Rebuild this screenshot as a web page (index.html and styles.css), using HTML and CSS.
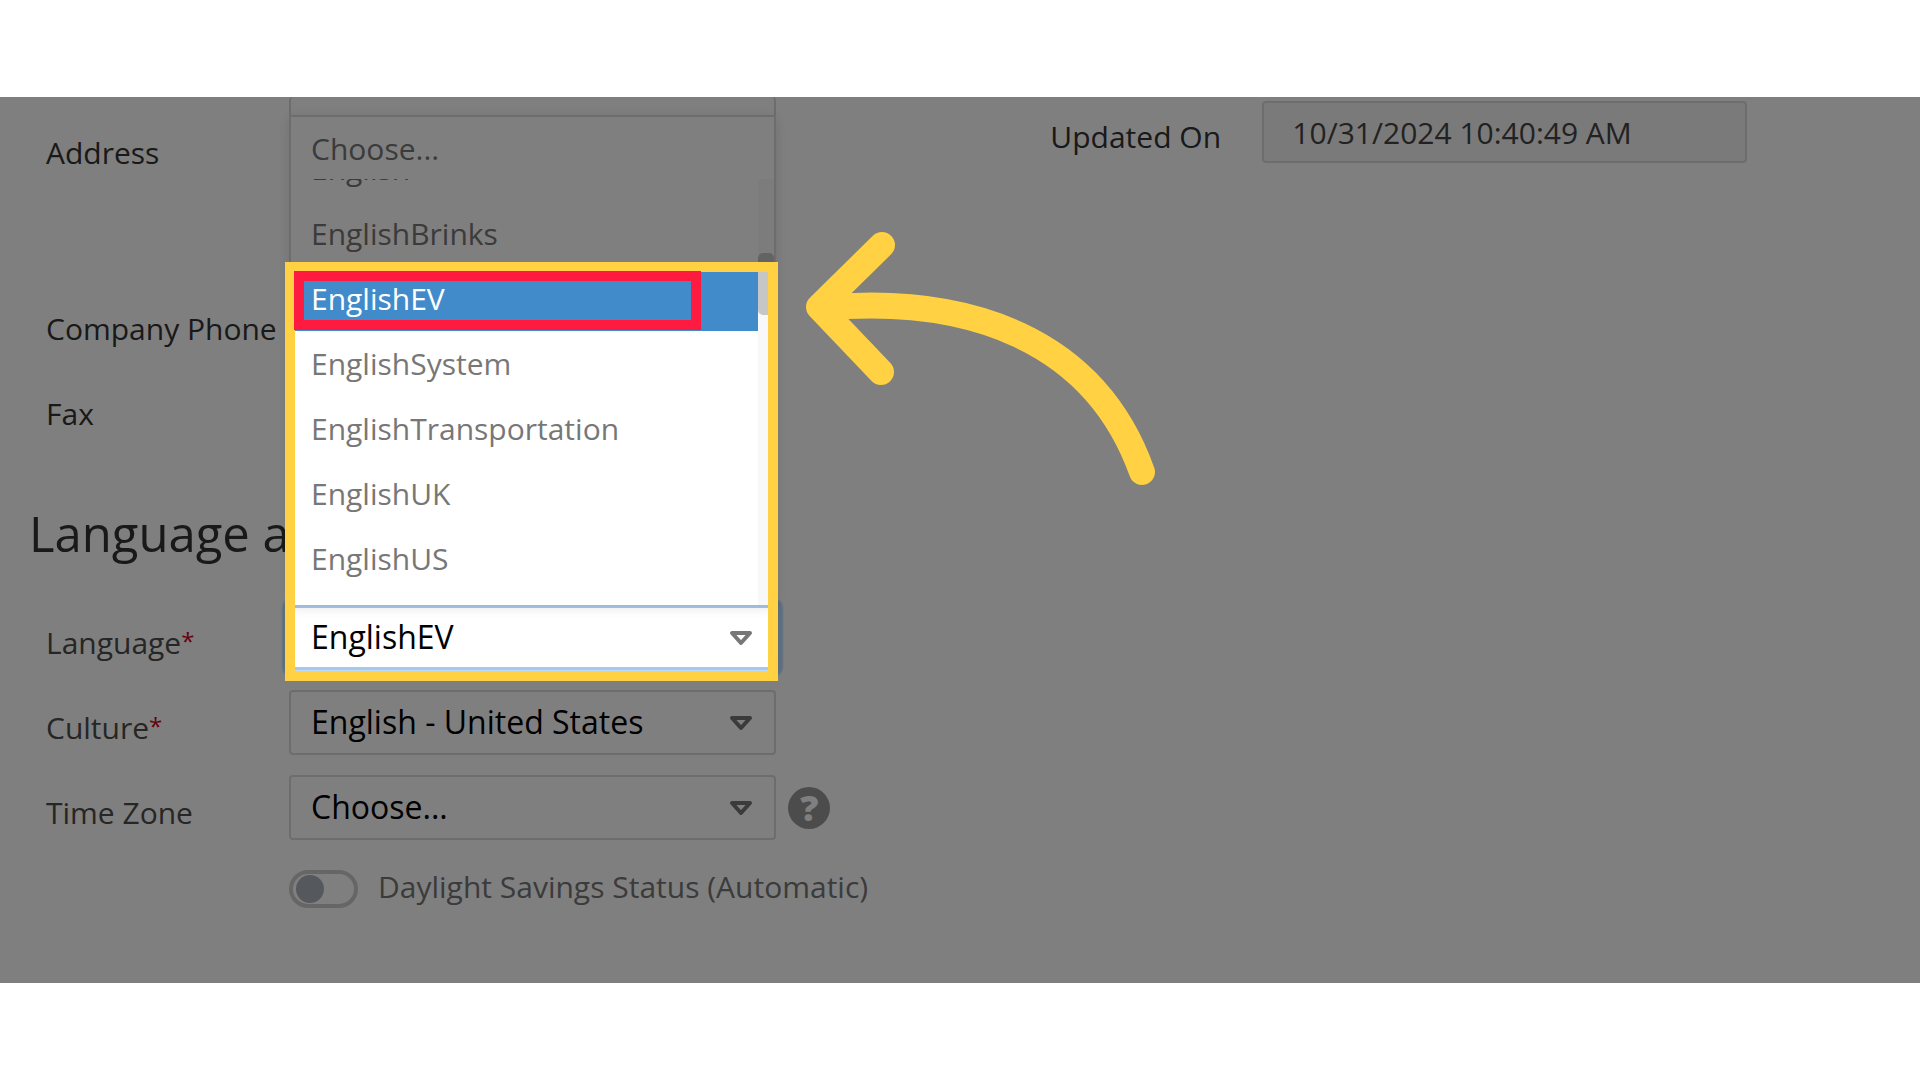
FILE: index.html
```html
<!doctype html>
<html lang="en">
  <head>
    <meta charset="UTF-8" />
    <meta name="viewport" content="width=device-width, initial-scale=1.0" />
    <title>Language Settings</title>
    <link rel="stylesheet" href="styles.css">
  </head>
  <body>
    <main class="stage">
      <form class="columns">
        <div class="column">
          <div class="row row-address">
            <label for="address">Address</label>
            <textarea id="address" class="control"></textarea>
          </div>
          <div class="row">
            <label for="phone">Company Phone</label>
            <input type="text" id="phone" class="control">
          </div>
          <div class="row">
            <label for="fax">Fax</label>
            <input type="text" id="fax" class="control">
          </div>

          <h2>Language a</h2>

          <div class="row soft">
            <label for="language">Language<span class="required">*</span></label>
            <div class="picker focused">
              <select id="language" class="control">
                <option>EnglishEV</option>
              </select>
              <svg class="caret" viewBox="0 0 24 16"><path d="M3 3H21L12 13Z" /></svg>
              <div class="menu">
                <div class="menu-head">Choose...</div>
                <div class="menu-body">
                  <ul role="listbox" aria-label="Language">
                    <li role="option">English</li>
                    <li role="option">EnglishBrinks</li>
                    <li role="option" aria-selected="true" class="active">EnglishEV</li>
                    <li role="option">EnglishSystem</li>
                    <li role="option">EnglishTransportation</li>
                    <li role="option">EnglishUK</li>
                    <li role="option">EnglishUS</li>
                  </ul>
                  <div class="track"><div class="thumb"></div></div>
                </div>
              </div>
              <div class="spotlight"></div>
              <div class="marker"></div>
            </div>
          </div>
          <div class="row soft">
            <label for="culture">Culture<span class="required">*</span></label>
            <div class="picker">
              <select id="culture" class="control">
                <option>English - United States</option>
              </select>
              <svg class="caret" viewBox="0 0 24 16"><path d="M3 3H21L12 13Z" /></svg>
            </div>
          </div>
          <div class="row soft">
            <label for="timezone">Time Zone</label>
            <div class="picker">
              <select id="timezone" class="control">
                <option>Choose...</option>
              </select>
              <svg class="caret" viewBox="0 0 24 16"><path d="M3 3H21L12 13Z" /></svg>
            </div>
            <button type="button" class="help" aria-label="Help">?</button>
          </div>
          <div class="switch-row">
            <input type="checkbox" id="daylight" class="switch">
            <label for="daylight">Daylight Savings Status (Automatic)</label>
          </div>
        </div>

        <div class="column">
          <div class="row row-updated">
            <label for="updated">Updated On</label>
            <input type="text" id="updated" class="control" value="10/31/2024 10:40:49 AM" readonly>
          </div>
        </div>
      </form>

      <svg class="arrow" viewBox="0 0 400 300">
        <path d="M102 35L39 97L101 162M40 98C190 84 315 130 362 262" />
      </svg>
    </main>
  </body>
</html>
```
FILE: styles.css
```css
* {
  box-sizing: border-box;
}
body {
  margin: 0;
  min-height: 100vh;
  display: flex;
  flex-direction: column;
  justify-content: center;
  background: white;
  color: #333;
  font-family: "Open Sans", "Noto Sans", sans-serif;
  font-size: 30px;
  line-height: 40px;
}
.stage {
  position: relative;
  overflow: hidden;
  padding-bottom: 65px;
}
.columns {
  display: grid;
  grid-template-columns: minmax(0, 1.15fr) minmax(0, 1fr);
  gap: 220px;
  padding: 0 9% 0 29px;
}
.row {
  display: grid;
  grid-template-columns: 231px 1fr 42px;
  column-gap: 12px;
  height: 65px;
  margin-bottom: 20px;
  padding-left: 17px;
}
.row label {
  padding-top: 18px;
  white-space: nowrap;
}
.row-address {
  height: 174px;
}
.row-address label {
  padding-top: 36px;
}
.soft {
  color: #4c4c4c;
}
.required {
  color: #d0021b;
  font-size: 24px;
  line-height: 20px;
  vertical-align: 4px;
}
h2 {
  margin: 62px 0 42px;
  font-size: 49px;
  font-weight: 400;
  line-height: 60px;
  white-space: nowrap;
}
.control {
  display: block;
  width: 100%;
  height: 100%;
  margin: 0;
  padding: 0 20px 2px;
  border: 2px solid #dadada;
  border-radius: 4px;
  background: white;
  color: black;
  font: inherit;
  font-size: 32px;
  appearance: none;
  resize: none;
  outline: none;
}
#address {
  border-top: 0;
}
.picker {
  position: relative;
}
.caret {
  position: absolute;
  top: 25px;
  right: 23px;
  width: 24px;
  height: 16px;
  fill: none;
  stroke: #777;
  stroke-width: 4;
  stroke-linejoin: round;
}
.focused .control {
  border: 3px solid #a9c9ea;
  padding: 0 19px 2px;
  box-shadow: 0 0 2px 7px #b9dcff;
}

/* language list, opens upwards */
.menu {
  position: absolute;
  z-index: 1;
  left: 0;
  right: 0;
  bottom: 100%;
  border: 2px solid #dadada;
  border-bottom: 0;
  background: white;
  color: #777;
  box-shadow: 0 2px 12px rgba(0, 0, 0, 0.12);
}
.menu-head {
  height: 62px;
  padding: 12px 20px;
}
.menu-body {
  display: flex;
  height: 426px;
}
ul {
  flex: 1;
  display: flex;
  flex-direction: column;
  justify-content: flex-end;
  overflow: hidden;
  margin: 0;
  padding: 0 0 14px;
  list-style: none;
}
li {
  flex: none;
  height: 65px;
  padding: 13px 20px 12px;
}
.active {
  background: #428bca;
  color: white;
}
.track {
  display: flow-root;
  width: 16px;
  background: #f8f8f8;
}
.thumb {
  height: 62px;
  margin-top: 74px;
  border-radius: 5px;
  background: #c6c6c6;
}

/* dims the whole stage except for its own box */
.spotlight {
  position: absolute;
  z-index: 2;
  top: -343px;
  right: -2px;
  bottom: -11px;
  left: -4px;
  border: 10px solid #ffd143;
  box-shadow: 0 0 0 4000px rgba(0, 0, 0, 0.5);
  pointer-events: none;
}
.marker {
  position: absolute;
  z-index: 3;
  top: -334px;
  right: 75px;
  left: 5px;
  height: 59px;
  border: 10px solid #ff1a40;
  pointer-events: none;
}

.help {
  align-self: center;
  width: 42px;
  height: 42px;
  padding: 0;
  border: 0;
  border-radius: 50%;
  background: #999;
  color: white;
  font: inherit;
  font-size: 36px;
  font-weight: 800;
  line-height: 42px;
}
.switch-row {
  display: flex;
  align-items: center;
  gap: 20px;
  height: 58px;
  padding-left: 260px;
  color: #777;
  white-space: nowrap;
}
.switch-row label {
  padding-bottom: 4px;
}
.switch {
  flex: none;
  display: flex;
  align-items: center;
  width: 69px;
  height: 38px;
  margin: 0;
  padding: 0 3px;
  border: 4px solid #ccc;
  border-radius: 19px;
  background: white;
  appearance: none;
}
.switch::before {
  content: "";
  width: 28px;
  height: 28px;
  border-radius: 50%;
  background: #aab0b8;
}
.row-updated {
  grid-template-columns: 200px 1fr;
  height: 62px;
  margin-top: 4px;
  padding-left: 0;
}
.row-updated label {
  padding-top: 16px;
}
.row-updated .control {
  padding: 0 28px;
  background: #f4f4f4;
  color: #444;
  font-size: 30px;
}
.arrow {
  position: absolute;
  z-index: 3;
  top: 113px;
  left: 780px;
  width: 400px;
  height: 300px;
  fill: none;
  stroke: #ffd143;
  stroke-width: 26;
  stroke-linecap: round;
  stroke-linejoin: round;
  pointer-events: none;
}
```
